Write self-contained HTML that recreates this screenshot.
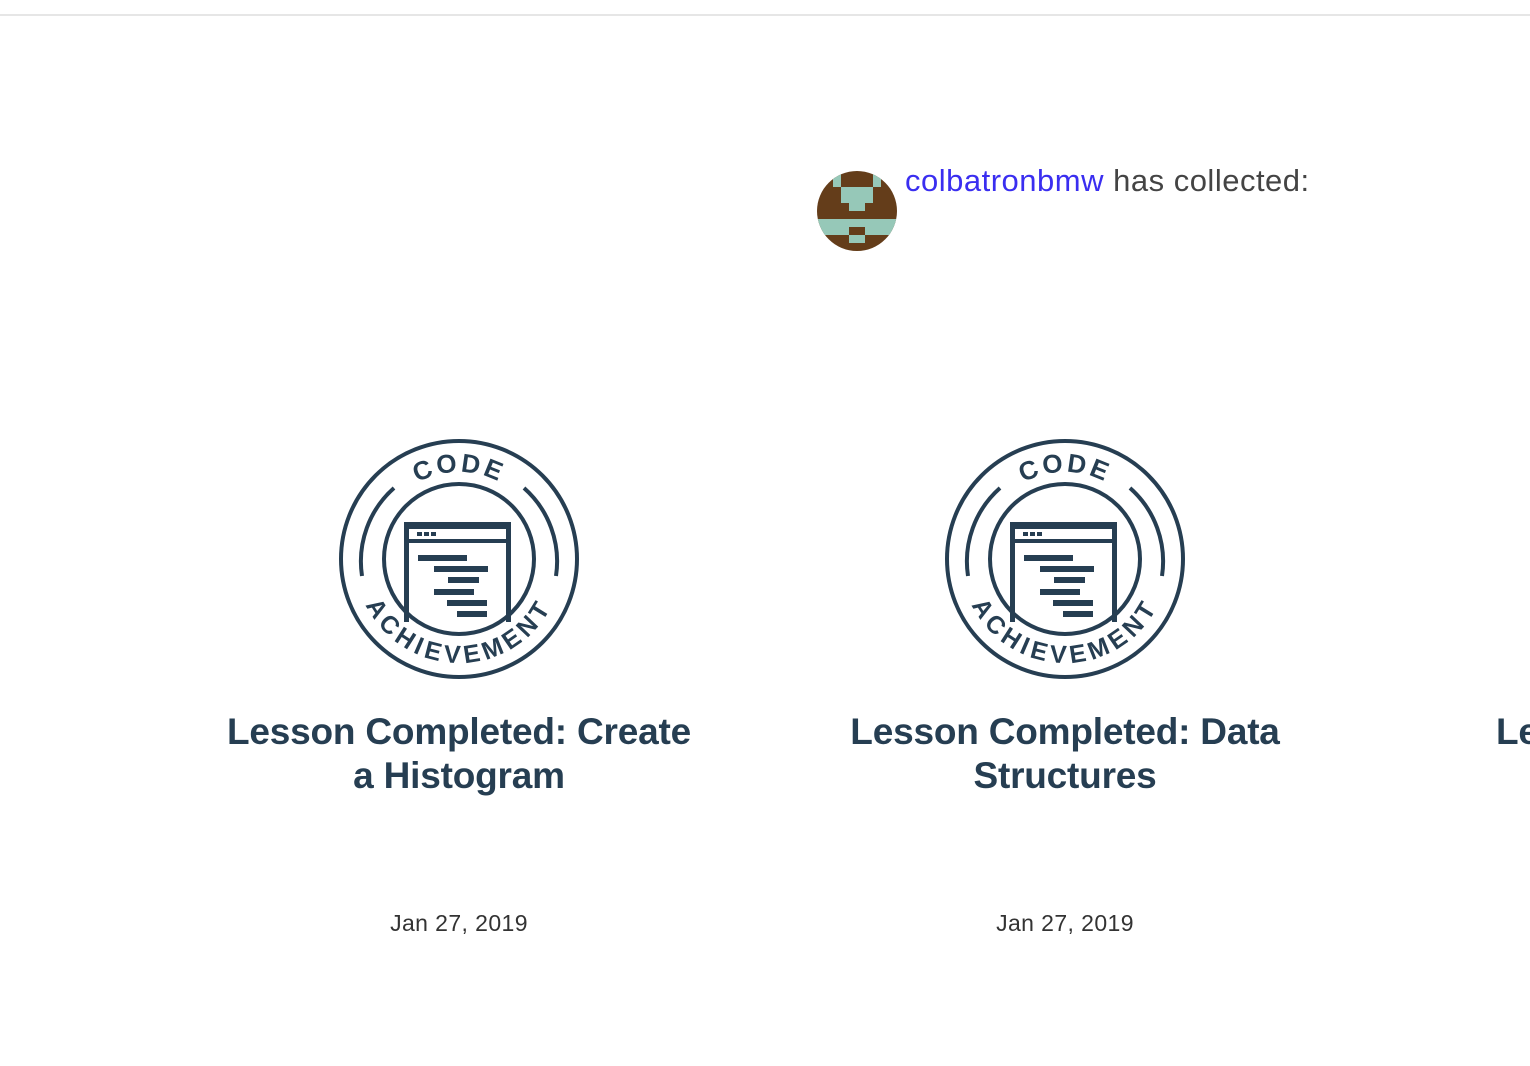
<!DOCTYPE html>
<html><head><meta charset="utf-8"><style>
body{margin:0;width:1530px;height:1066px;background:#fff;overflow:hidden;position:relative;font-family:"Liberation Sans",sans-serif;}
.top{position:absolute;left:0;top:14px;width:1530px;height:2px;background:#e6e6e6}
.hdr{position:absolute;left:905px;top:163px;font-size:31px;letter-spacing:0.5px;color:#444;white-space:nowrap}
.hdr a{color:#3a2ef0;text-decoration:none}
.card{position:absolute;top:438px;width:500px;text-align:center}
.card svg{display:block;margin:0 auto}
.title{position:absolute;top:272px;left:15px;width:470px;font-weight:bold;font-size:37px;line-height:44px;color:#263e52;letter-spacing:-0.2px}
.date{position:absolute;top:472px;left:0;width:500px;font-size:23px;letter-spacing:0.4px;color:#333}
</style></head><body>
<div class="top"></div>
<svg style="position:absolute;left:817px;top:171px" width="80" height="80" viewBox="817 171 80 80">
<defs><clipPath id="c"><circle cx="857" cy="211" r="40"/></clipPath></defs>
<g clip-path="url(#c)">
<rect x="817" y="171" width="80" height="80" fill="#643d1a"/>
<g fill="#96c8b8">
<rect x="833" y="171" width="8" height="16"/><rect x="873" y="171" width="8" height="16"/>
<rect x="841" y="187" width="32" height="16"/><rect x="849" y="203" width="16" height="8"/>
<rect x="817" y="219" width="80" height="16"/><rect x="849" y="235" width="16" height="8"/>
<rect x="817" y="235" width="8" height="16"/><rect x="889" y="235" width="8" height="16"/>
</g>
<rect x="849" y="227" width="16" height="8" fill="#643d1a"/>
</g></svg>
<div class="hdr"><a>colbatronbmw</a> has collected:</div>

<div class="card" style="left:209px">
<svg width="242" height="242" viewBox="0 0 242 242">
<g fill="none" stroke="#263e52" stroke-width="4">
<circle cx="121" cy="121" r="118"/>
<circle cx="121" cy="121" r="75"/>
<path d="M56 50 A98 98 0 0 0 24 138"/>
<path d="M186 50 A98 98 0 0 1 218 138"/>
</g>
<defs><path id="t1" d="M34 121 A87 87 0 0 1 208 121"/><path id="b1" d="M17 121 A104 104 0 0 0 225 121"/></defs>
<text font-family="Liberation Sans" font-weight="bold" font-size="26" fill="#263e52" letter-spacing="3"><textPath href="#t1" startOffset="50%" text-anchor="middle">CODE</textPath></text>
<text font-family="Liberation Sans" font-weight="bold" font-size="25" fill="#263e52" letter-spacing="4.5"><textPath href="#b1" startOffset="50%" text-anchor="middle">ACHIEVEMENT</textPath></text>
<g fill="#263e52">
<path d="M66 84 h107 v100 h-5 v-93 h-97 v93 h-5z"/>
<rect x="71" y="101" width="97" height="4"/>
<rect x="79" y="94" width="5" height="4"/><rect x="86" y="94" width="5" height="4"/><rect x="93" y="94" width="5" height="4"/>
<rect x="80" y="117" width="49" height="6"/><rect x="96" y="128" width="54" height="6"/>
<rect x="110" y="139" width="31" height="6"/><rect x="96" y="151" width="40" height="6"/>
<rect x="109" y="162" width="40" height="6"/><rect x="119" y="173" width="30" height="6"/>
</g></svg>
<div class="title">Lesson Completed: Create a Histogram</div>
<div class="date">Jan 27, 2019</div>
</div>

<div class="card" style="left:815px">
<svg width="242" height="242" viewBox="0 0 242 242">
<g fill="none" stroke="#263e52" stroke-width="4">
<circle cx="121" cy="121" r="118"/>
<circle cx="121" cy="121" r="75"/>
<path d="M56 50 A98 98 0 0 0 24 138"/>
<path d="M186 50 A98 98 0 0 1 218 138"/>
</g>
<text font-family="Liberation Sans" font-weight="bold" font-size="26" fill="#263e52" letter-spacing="3"><textPath href="#t1" startOffset="50%" text-anchor="middle">CODE</textPath></text>
<text font-family="Liberation Sans" font-weight="bold" font-size="25" fill="#263e52" letter-spacing="4.5"><textPath href="#b1" startOffset="50%" text-anchor="middle">ACHIEVEMENT</textPath></text>
<g fill="#263e52">
<path d="M66 84 h107 v100 h-5 v-93 h-97 v93 h-5z"/>
<rect x="71" y="101" width="97" height="4"/>
<rect x="79" y="94" width="5" height="4"/><rect x="86" y="94" width="5" height="4"/><rect x="93" y="94" width="5" height="4"/>
<rect x="80" y="117" width="49" height="6"/><rect x="96" y="128" width="54" height="6"/>
<rect x="110" y="139" width="31" height="6"/><rect x="96" y="151" width="40" height="6"/>
<rect x="109" y="162" width="40" height="6"/><rect x="119" y="173" width="30" height="6"/>
</g></svg>
<div class="title">Lesson Completed: Data Structures</div>
<div class="date">Jan 27, 2019</div>
</div>

<div class="title" style="position:absolute;left:1496px;top:710px;width:100px;text-align:left">Le</div>
</body></html>
